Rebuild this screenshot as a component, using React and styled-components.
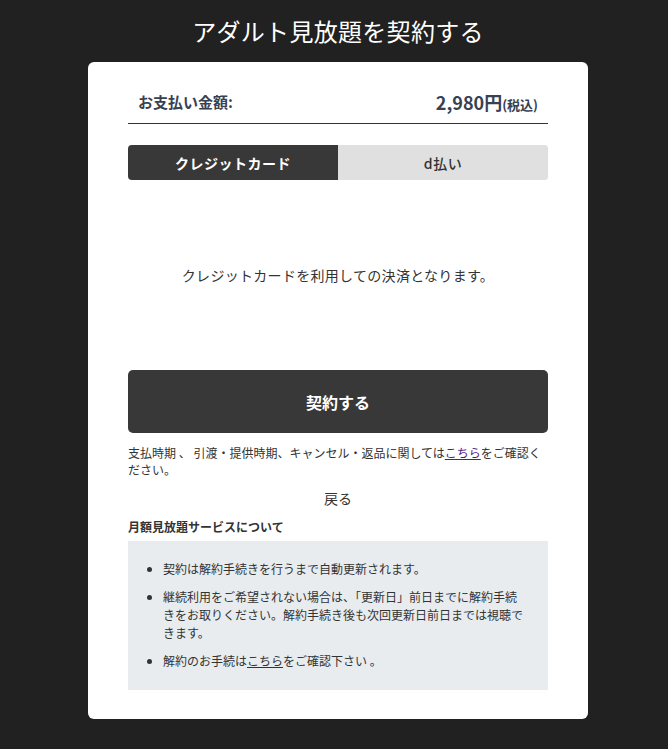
import React, { useState } from "react";
import styled, { createGlobalStyle } from "styled-components";

const GlobalStyle = createGlobalStyle`
  html, body {
    margin: 0;
    padding: 0;
    background: #212121;
  }
  body {
    font-family: "Noto Sans CJK JP", "Noto Sans", sans-serif;
  }
  * { box-sizing: border-box; }
`;

const Page = styled.div`
  min-height: 749px;
  background: #212121;
  display: flex;
  flex-direction: column;
  align-items: center;
  padding: 12px 0 0 8px;
`;

const Title = styled.h1`
  margin: 0 0 12px;
  color: #fff;
  font-size: 24px;
  font-weight: 400;
  line-height: 38px;
  letter-spacing: 0.3px;
`;

const Card = styled.div`
  width: 500px;
  background: #fff;
  border-radius: 6px;
  padding: 18px 40px 29px;
  display: flex;
  flex-direction: column;
`;

const PriceRow = styled.div`
  display: flex;
  justify-content: space-between;
  align-items: center;
  padding: 0 10px;
  height: 44px;
  border-bottom: 1px solid #333;
  color: #374151;
`;

const PriceLabel = styled.span`
  font-size: 15px;
  font-weight: 700;
`;

const Price = styled.span`
  font-size: 18px;
  font-weight: 700;
  small {
    font-size: 13px;
  }
`;

const Tabs = styled.div`
  display: flex;
  margin-top: 21px;
  border-radius: 4px;
  overflow: hidden;
  background: #e0e0e0;
`;

const Tab = styled.button`
  flex: 1;
  height: 35px;
  border: 0;
  padding: 0;
  font-family: inherit;
  font-size: 14px;
  font-weight: ${(p) => (p.$active ? 700 : 500)};
  letter-spacing: 0.5px;
  background: ${(p) => (p.$active ? "#383838" : "#e0e0e0")};
  color: ${(p) => (p.$active ? "#fff" : "#333")};
  cursor: pointer;
`;

const Info = styled.p`
  margin: 0;
  height: 190px;
  display: flex;
  align-items: center;
  justify-content: center;
  font-size: 14px;
  color: #333;
  letter-spacing: 0.3px;
`;

const SubmitButton = styled.button`
  height: 63px;
  border: 0;
  border-radius: 5px;
  background: #383838;
  color: #fff;
  font-family: inherit;
  font-size: 16px;
  font-weight: 700;
  cursor: pointer;
`;

const Note = styled.p`
  margin: 11px 0 0;
  font-size: 12px;
  line-height: 17px;
  color: #333;
`;

const Link = styled.a`
  color: ${(p) => (p.$visited ? "#551a8b" : "#333")};
  text-decoration: underline;
`;

const Back = styled.a`
  display: block;
  margin-top: 9px;
  text-align: center;
  font-size: 14px;
  line-height: 22px;
  color: #333;
`;

const SectionHead = styled.h2`
  margin: 9px 0 5px;
  font-size: 12px;
  font-weight: 700;
  line-height: 18px;
  color: #333;
`;

const InfoBox = styled.ul`
  margin: 0;
  background: #e8ecef;
  padding: 19px 24px 20px 35px;
  list-style: disc;
  color: #333;
  font-size: 12px;
  line-height: 18px;
`;

const Item = styled.li`
  & + & {
    margin-top: 10px;
  }
`;

export default function App() {
  const [method, setMethod] = useState("card");
  return (
    <>
      <GlobalStyle />
      <Page>
        <Title>アダルト見放題を契約する</Title>
        <Card>
          <PriceRow>
            <PriceLabel>お支払い金額:</PriceLabel>
            <Price>
              2,980円<small>(税込)</small>
            </Price>
          </PriceRow>
          <Tabs>
            <Tab $active={method === "card"} onClick={() => setMethod("card")}>
              クレジットカード
            </Tab>
            <Tab $active={method === "d"} onClick={() => setMethod("d")}>
              d払い
            </Tab>
          </Tabs>
          <Info>クレジットカードを利用しての決済となります。</Info>
          <SubmitButton>契約する</SubmitButton>
          <Note>
            支払時期 、 引渡・提供時期、キャンセル・返品に関しては
            <Link $visited href="#">こちら</Link>をご確認ください。
          </Note>
          <Back>戻る</Back>
          <SectionHead>月額見放題サービスについて</SectionHead>
          <InfoBox>
            <Item>契約は解約手続きを行うまで自動更新されます。</Item>
            <Item>
              継続利用をご希望されない場合は、「更新日」前日までに解約手続きをお取りください。解約手続き後も次回更新日前日までは視聴できます。
            </Item>
            <Item>
              解約のお手続は<Link href="#">こちら</Link>をご確認下さい 。
            </Item>
          </InfoBox>
        </Card>
      </Page>
    </>
  );
}
